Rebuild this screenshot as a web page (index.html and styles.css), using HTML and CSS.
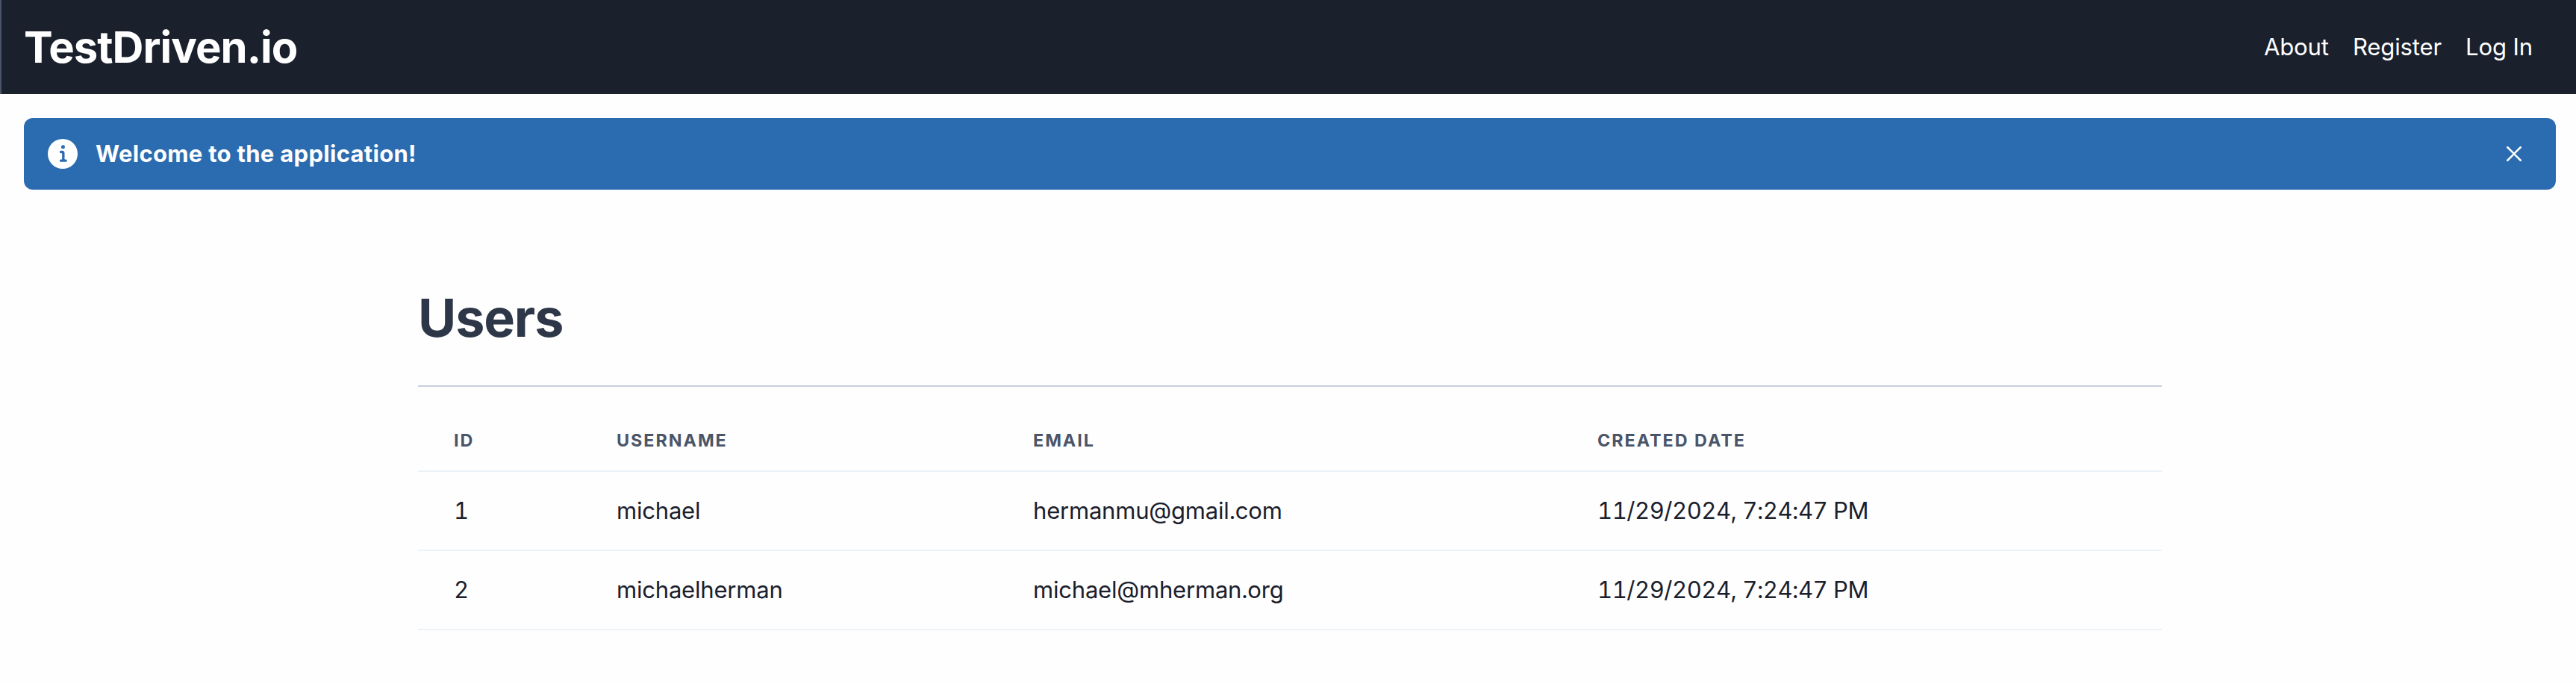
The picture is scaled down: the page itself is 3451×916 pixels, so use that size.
FILE: index.html
```html
<!DOCTYPE html>
<html lang="en">
<head>
  <meta charset="UTF-8">
  <meta name="viewport" content="width=device-width, initial-scale=1.0">
  <title>TestDriven.io</title>
  <link rel="stylesheet" href="styles.css">
</head>
<body>
  <nav class="navbar">
    <a class="brand" href="#">TestDriven.io</a>
    <div class="nav-links">
      <a href="#">About</a>
      <a href="#">Register</a>
      <a href="#">Log In</a>
    </div>
  </nav>

  <!-- Flash message -->
  <div class="alert">
    <svg class="alert-icon" viewBox="0 0 24 24">
      <path fill="currentColor" d="M12,0A12,12,0,1,0,24,12,12.013,12.013,0,0,0,12,0Zm.25,5a1.5,1.5,0,1,1-1.5,1.5A1.5,1.5,0,0,1,12.25,5ZM14.5,18.5h-4a1,1,0,0,1,0-2h.75a.25.25,0,0,0,.25-.25v-4.5a.25.25,0,0,0-.25-.25H10.5a1,1,0,0,1,0-2h1a2,2,0,0,1,2,2v4.75a.25.25,0,0,0,.25.25h.75a1,1,0,1,1,0,2Z"/>
    </svg>
    <div class="alert-title">Welcome to the application!</div>
    <button class="close-btn" aria-label="Close" onclick="this.parentElement.remove()">
      <svg viewBox="0 0 24 24">
        <path fill="currentColor" d="M.439,21.44a1.5,1.5,0,0,0,2.122,2.121L11.823,14.3a.25.25,0,0,1,.354,0l9.262,9.263a1.5,1.5,0,1,0,2.122-2.121L14.3,12.177a.25.25,0,0,1,0-.354l9.263-9.262A1.5,1.5,0,0,0,21.439.44L12.177,9.7a.25.25,0,0,1-.354,0L2.561.44A1.5,1.5,0,0,0,.439,2.561L9.7,11.823a.25.25,0,0,1,0,.354Z"/>
      </svg>
    </button>
  </div>

  <main class="container">
    <h1>Users</h1>
    <hr>
    <table class="users-table">
      <thead>
        <tr>
          <th class="col-id">ID</th>
          <th class="col-username">Username</th>
          <th class="col-email">Email</th>
          <th>Created Date</th>
        </tr>
      </thead>
      <tbody>
        <tr>
          <td>1</td>
          <td>michael</td>
          <td>hermanmu@gmail.com</td>
          <td class="date">11/29/2024, 7:24:47 PM</td>
        </tr>
        <tr>
          <td>2</td>
          <td>michaelherman</td>
          <td>michael@mherman.org</td>
          <td class="date">11/29/2024, 7:24:47 PM</td>
        </tr>
      </tbody>
    </table>
  </main>
</body>
</html>
```
FILE: styles.css
```css
* {
  box-sizing: border-box;
}

body {
  margin: 0;
  background: #fefefe;
  color: #1a202c;
  font-family: Inter, "Liberation Sans", sans-serif;
  font-size: 31px;
  line-height: 48px;
}

a {
  color: inherit;
  text-decoration: none;
}

/* Navbar */
.navbar {
  display: flex;
  justify-content: space-between;
  align-items: center;
  height: 126px;
  padding: 0 58px 0 30px;
  border-left: 2px solid #4a5568;
  background: #1a202c;
  color: #fff;
}

.brand {
  font-size: 58px;
  font-weight: 700;
  letter-spacing: -1px;
  line-height: 72px;
}

.nav-links {
  display: flex;
  gap: 32px;
  letter-spacing: -0.1px;
}

/* Alert */
.alert {
  display: flex;
  align-items: center;
  height: 96px;
  margin: 32px 27px 0 32px;
  padding: 0 32px;
  border-radius: 12px;
  background: #2b6cb0;
  color: #fff;
}

.alert-icon {
  width: 40px;
  height: 40px;
  margin-right: 24px;
}

.alert-title {
  flex: 1;
  font-weight: 700;
  letter-spacing: 0.3px;
}

.close-btn {
  display: flex;
  align-items: center;
  justify-content: center;
  width: 48px;
  height: 48px;
  padding: 0;
  border: none;
  background: none;
  color: #fff;
  cursor: pointer;
}

.close-btn svg {
  width: 20px;
  height: 20px;
}

/* Users */
.container {
  width: 2336px;
  margin: 128px 0 0 560px;
}

h1 {
  margin: 0;
  color: #2d3748;
  font-size: 70px;
  font-weight: 700;
  letter-spacing: -1.1px;
  line-height: 88px;
}

hr {
  height: 2px;
  margin: 46px 0 32px;
  border: none;
  background: #c8d0dc;
}

.users-table {
  width: 100%;
  table-layout: fixed;
  border-spacing: 0;
  letter-spacing: -0.2px;
}

th,
td {
  padding: 0 48px;
  border-bottom: 2px solid #edf2f7;
  text-align: left;
}

th {
  height: 82px;
  color: #4a5568;
  font-size: 23.3px;
  font-weight: 700;
  letter-spacing: 2px;
  line-height: 32px;
  text-transform: uppercase;
}

td {
  height: 106px;
  font-variant-numeric: tabular-nums;
}

td.date {
  letter-spacing: -0.46px;
}

.col-id {
  width: 218px;
}

.col-username {
  width: 558px;
}

.col-email {
  width: 756px;
}
```
